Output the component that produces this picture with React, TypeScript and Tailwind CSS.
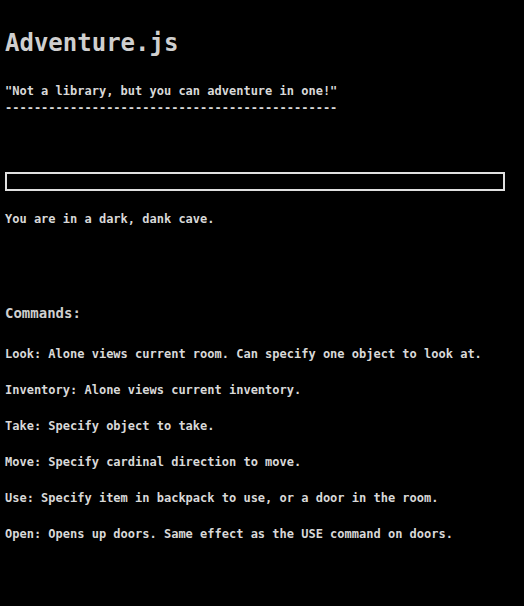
import React from 'react';

const commands = [
  'Look: Alone views current room. Can specify one object to look at.',
  'Inventory: Alone views current inventory.',
  'Take: Specify object to take.',
  'Move: Specify cardinal direction to move.',
  'Use: Specify item in backpack to use, or a door in the room.',
  'Open: Opens up doors. Same effect as the USE command on doors.',
];

const App: React.FC = () => {
  return (
    <div className="min-h-[606px] w-full bg-black px-[5px] text-[#d8d8d8] font-['DejaVu_Sans_Mono','Liberation_Mono',monospace] font-bold">
      {/* Header */}
      <h1 className="pt-[28px] text-[24px] leading-[30px] text-[#cfcfcf]">Adventure.js</h1>
      <p className="mt-[26px] text-[12px] leading-[14px]">"Not a library, but you can adventure in one!"</p>
      <p className="mt-[3px] text-[12px] leading-[14px]">----------------------------------------------</p>

      {/* Input + output */}
      <input
        type="text"
        className="mt-[57px] block h-[19px] w-[500px] border-2 border-[#e0e0e0] bg-black text-[12px] outline-none"
      />
      <p className="mt-[21px] text-[12px] leading-[14px]">You are in a dark, dank cave.</p>

      {/* Commands */}
      <h2 className="mt-[78px] text-[14px] leading-[18px] text-[#cfcfcf]">Commands:</h2>
      <div className="mt-[25px] flex flex-col gap-[22px]">
        {commands.map((c) => (
          <p key={c} className="text-[12px] leading-[14px]">{c}</p>
        ))}
      </div>
    </div>
  );
};

export default App;
